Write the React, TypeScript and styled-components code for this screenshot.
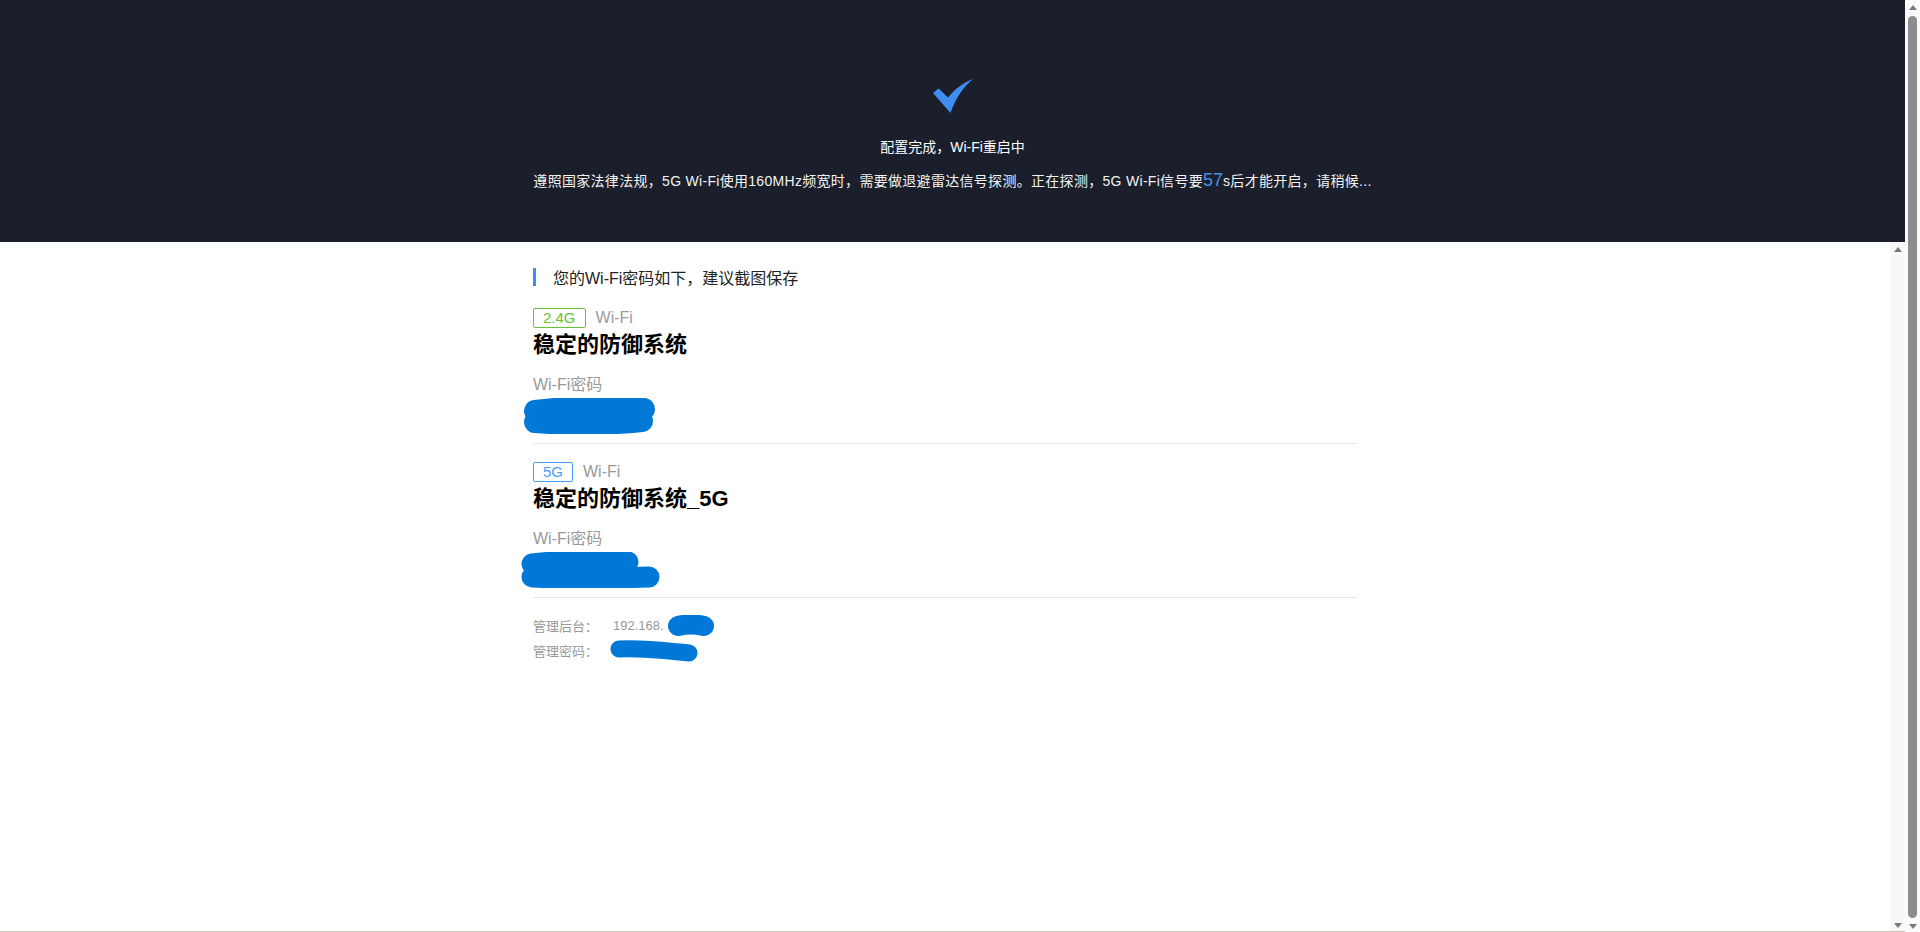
import React from "react";
import styled, { createGlobalStyle } from "styled-components";

const GlobalStyle = createGlobalStyle`
  html, body { margin: 0; padding: 0; background: #ffffff; overflow: hidden; }
  body {
    font-family: "Liberation Sans", Arial, "Noto Sans CJK SC", sans-serif;
    color: #333;
  }
`;

const Page = styled.div`
  display: flex;
  height: 100vh;
`;

const Main = styled.div`
  flex: 1;
  min-width: 0;
  display: flex;
  flex-direction: column;
`;

const Header = styled.header`
  height: 242px;
  flex-shrink: 0;
  box-sizing: border-box;
  padding-top: 79px;
  background: #1b1e2b;
  display: flex;
  flex-direction: column;
  align-items: center;
  color: #ffffff;
`;

const CheckIcon = styled.svg`
  width: 40px;
  height: 34px;
  display: block;
`;

const StatusTitle = styled.div`
  margin-top: 24px;
  font-size: 14px;
  line-height: 20px;
  color: #ffffff;
`;

const StatusNote = styled.div`
  margin-top: 11px;
  font-size: 14px;
  line-height: 24px;
  letter-spacing: 0.3px;
  color: #f2f2f2;
  white-space: nowrap;
`;

const Countdown = styled.span`
  font-size: 18px;
  letter-spacing: 0;
  color: #4a8fe6;
`;

const Body = styled.div`
  flex: 1;
  min-height: 0;
  display: flex;
  border-bottom: 1px solid #cbc3b8;
`;

const ContentPane = styled.main`
  flex: 1;
  min-width: 0;
`;

const Rail = styled.div<{ $bg: string }>`
  width: 15px;
  flex-shrink: 0;
  box-sizing: border-box;
  padding: 5px 0 3px;
  display: flex;
  flex-direction: column;
  align-items: center;
  justify-content: space-between;
  background: ${(p) => p.$bg};
`;

const Arrow = styled.span<{ $down?: boolean }>`
  width: 0;
  height: 0;
  flex-shrink: 0;
  border-left: 4.5px solid transparent;
  border-right: 4.5px solid transparent;
  ${(p) =>
    p.$down
      ? "border-top: 5px solid #7a7a7a;"
      : "border-bottom: 5px solid #7a7a7a;"}
`;

const Thumb = styled.div`
  flex: 1;
  width: 9px;
  margin: 6px 0;
  border-radius: 5px;
  background: #8d8d8d;
`;

const Content = styled.div`
  width: 824px;
  margin: 0 auto;
  padding-top: 26px;
`;

const SectionTitle = styled.div`
  display: flex;
  align-items: center;
  height: 18px;
  font-size: 16px;
  color: #222;
  margin-bottom: 4px;
  &::before {
    content: "";
    width: 3px;
    height: 18px;
    background: #3d8ef0;
    margin-right: 17px;
  }
`;

const WifiBlock = styled.section`
  padding: 18px 0 7px;
  border-bottom: 1px solid #e4e6ea;
`;

const TagRow = styled.div`
  display: flex;
  align-items: center;
  height: 19px;
`;

const Tag = styled.span<{ $color: string }>`
  box-sizing: border-box;
  height: 20px;
  padding: 0 9px;
  border: 1px solid ${(p) => p.$color};
  border-radius: 2px;
  color: ${(p) => p.$color};
  font-size: 15px;
  line-height: 18px;
`;

const TagText = styled.span`
  margin-left: 10px;
  font-size: 16px;
  line-height: 19px;
  color: #9a9a9a;
`;

const SsidName = styled.h2`
  margin: 3px 0 0;
  font-size: 22px;
  line-height: 30px;
  font-weight: 700;
  color: #000;
`;

const FieldLabel = styled.div`
  margin-top: 14px;
  font-size: 16px;
  line-height: 22px;
  color: #999;
`;

const PasswordRow = styled.div`
  height: 40px;
  display: flex;
  align-items: center;
  margin-left: -12px;
`;

const Footer = styled.div`
  padding-top: 15px;
  display: flex;
  flex-direction: column;
`;

const InfoRow = styled.div`
  display: flex;
  align-items: center;
  height: 25px;
  font-size: 13px;
  color: #999;
`;

const InfoLabel = styled.span`
  width: 65px;
  margin-right: 15px;
`;

const InfoValue = styled.span`
  color: #999;
`;

const Redaction = styled.svg<{ $offset?: number }>`
  display: block;
  flex-shrink: 0;
  margin-left: ${(p) => p.$offset ?? 0}px;
`;

const BLUE = "#0078d7";

export default function App() {
  return (
    <>
      <GlobalStyle />
      <Page>
        <Main>
          <Header>
            <CheckIcon viewBox="0 0 40 34">
              <path
                d="M0 14 L5.5 9.5 L15 18.5 C22 10 30 3.5 40 0 C31 7.5 23 18 17.5 34 Z"
                fill="#3d8ef0"
              />
            </CheckIcon>
            <StatusTitle>配置完成，Wi-Fi重启中</StatusTitle>
            <StatusNote>
              遵照国家法律法规，5G Wi-Fi使用160MHz频宽时，需要做退避雷达信号探测。正在探测，5G Wi-Fi信号要
              <Countdown>57</Countdown>s后才能开启，请稍候...
            </StatusNote>
          </Header>
          <Body>
            <ContentPane>
              <Content>
                <SectionTitle>您的Wi-Fi密码如下，建议截图保存</SectionTitle>

                <WifiBlock>
                  <TagRow>
                    <Tag $color="#67c23a">2.4G</Tag>
                    <TagText>Wi-Fi</TagText>
                  </TagRow>
                  <SsidName>稳定的防御系统</SsidName>
                  <FieldLabel>Wi-Fi密码</FieldLabel>
                  <PasswordRow>
                    <Redaction width="134" height="36" viewBox="0 0 134 36" $offset={2}>
                      <path
                        d="M12 13 C45 9 85 8 121 11 M12 24 C50 27 90 26 119 23"
                        stroke={BLUE}
                        strokeWidth="22"
                        strokeLinecap="round"
                        fill="none"
                      />
                    </Redaction>
                  </PasswordRow>
                </WifiBlock>

                <WifiBlock>
                  <TagRow>
                    <Tag $color="#409eff">5G</Tag>
                    <TagText>Wi-Fi</TagText>
                  </TagRow>
                  <SsidName>稳定的防御系统_5G</SsidName>
                  <FieldLabel>Wi-Fi密码</FieldLabel>
                  <PasswordRow>
                    <Redaction width="142" height="36" viewBox="0 0 142 36" $offset={-1}>
                      <path
                        d="M12 12 C45 8 85 8 108 10 M12 25 C55 27 100 26 129 25"
                        stroke={BLUE}
                        strokeWidth="21"
                        strokeLinecap="round"
                        fill="none"
                      />
                    </Redaction>
                  </PasswordRow>
                </WifiBlock>

                <Footer>
                  <InfoRow>
                    <InfoLabel>管理后台：</InfoLabel>
                    <InfoValue>192.168.</InfoValue>
                    <Redaction width="46" height="22" viewBox="0 0 46 22" $offset={4}>
                      <path
                        d="M10 11 C18 9 28 9 36 11"
                        stroke={BLUE}
                        strokeWidth="20"
                        strokeLinecap="round"
                        fill="none"
                      />
                    </Redaction>
                  </InfoRow>
                  <InfoRow>
                    <InfoLabel>管理密码：</InfoLabel>
                    <Redaction width="92" height="22" viewBox="0 0 92 22" $offset={-4}>
                      <path
                        d="M10 9 C30 8 50 10 80 13"
                        stroke={BLUE}
                        strokeWidth="17"
                        strokeLinecap="round"
                        fill="none"
                      />
                    </Redaction>
                  </InfoRow>
                </Footer>
              </Content>
            </ContentPane>
            <Rail $bg="#f8f8f8">
              <Arrow />
              <Arrow $down />
            </Rail>
          </Body>
        </Main>
        <Rail $bg="#fbfbfb">
          <Arrow />
          <Thumb />
          <Arrow $down />
        </Rail>
      </Page>
    </>
  );
}
